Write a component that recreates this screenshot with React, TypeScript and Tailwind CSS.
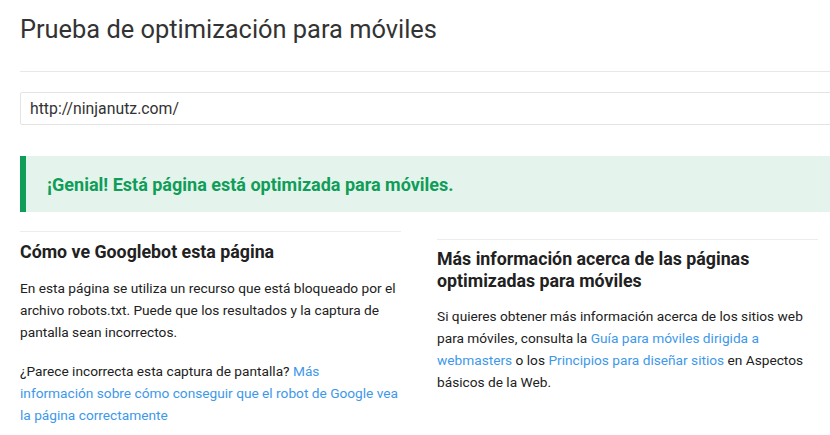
import React from "react";

const linkCls = "text-[#3d98ea]";

const App = () => {
  return (
    <div className="w-[830px] h-[435px] overflow-hidden bg-white font-['Roboto',sans-serif] text-[#212121]">
      <div className="pl-5 pr-3">
        <h1 className="pt-[12px] text-[25.4px] leading-[34px] font-normal text-[#333]">
          Prueba de optimización para móviles
        </h1>
        <div className="mt-[25px] -mr-10 border-t border-[#e8e8e8]" />
        <div className="mt-5 -mr-10 h-[33px] border border-[#e4e4e4] rounded-[2px] flex items-center pl-[9px] text-[15.8px] text-[#333]">
          http://ninjanutz.com/
        </div>
        <div className="mt-[31px] -mr-10 h-[56px] bg-[#e4f4ec] border-l-[6px] border-[#0f9d58] flex items-center pl-[21px]">
          <p className="text-[18px] font-bold text-[#0f9d58]">¡Genial! Está página está optimizada para móviles.</p>
        </div>
        <div className="mt-[19px] grid grid-cols-2 gap-9">
          <section className="border-t border-[#ececec]">
            <h2 className="mt-[8px] text-[17.8px] leading-[24px] font-bold text-[#212121]">Cómo ve Googlebot esta página</h2>
            <p className="mt-[13px] text-[13.7px] leading-[22px]">
              En esta página se utiliza un recurso que está bloqueado por el archivo robots.txt. Puede que los resultados y la captura de pantalla sean incorrectos.
            </p>
            <p className="mt-[17px] text-[13.7px] leading-[22px]">
              ¿Parece incorrecta esta captura de pantalla?{" "}
              <a className={linkCls} href="#">
                Más
                <br />
                información sobre cómo conseguir que el robot de Google vea la página correctamente
              </a>
            </p>
          </section>
          <section className="mt-2 border-t border-[#ececec]">
            <h2 className="mt-[8px] text-[17.8px] leading-[22px] font-bold text-[#212121]">
              Más información acerca de las páginas optimizadas para móviles
            </h2>
            <p className="mt-[13px] text-[13.7px] leading-[22px]">
              Si quieres obtener más información acerca de los sitios web para móviles, consulta la{" "}
              <a className={linkCls} href="#">Guía para móviles dirigida a webmasters</a> o los{" "}
              <a className={linkCls} href="#">Principios para diseñar sitios</a> en Aspectos básicos de la Web.
            </p>
          </section>
        </div>
      </div>
    </div>
  );
};

export default App;
